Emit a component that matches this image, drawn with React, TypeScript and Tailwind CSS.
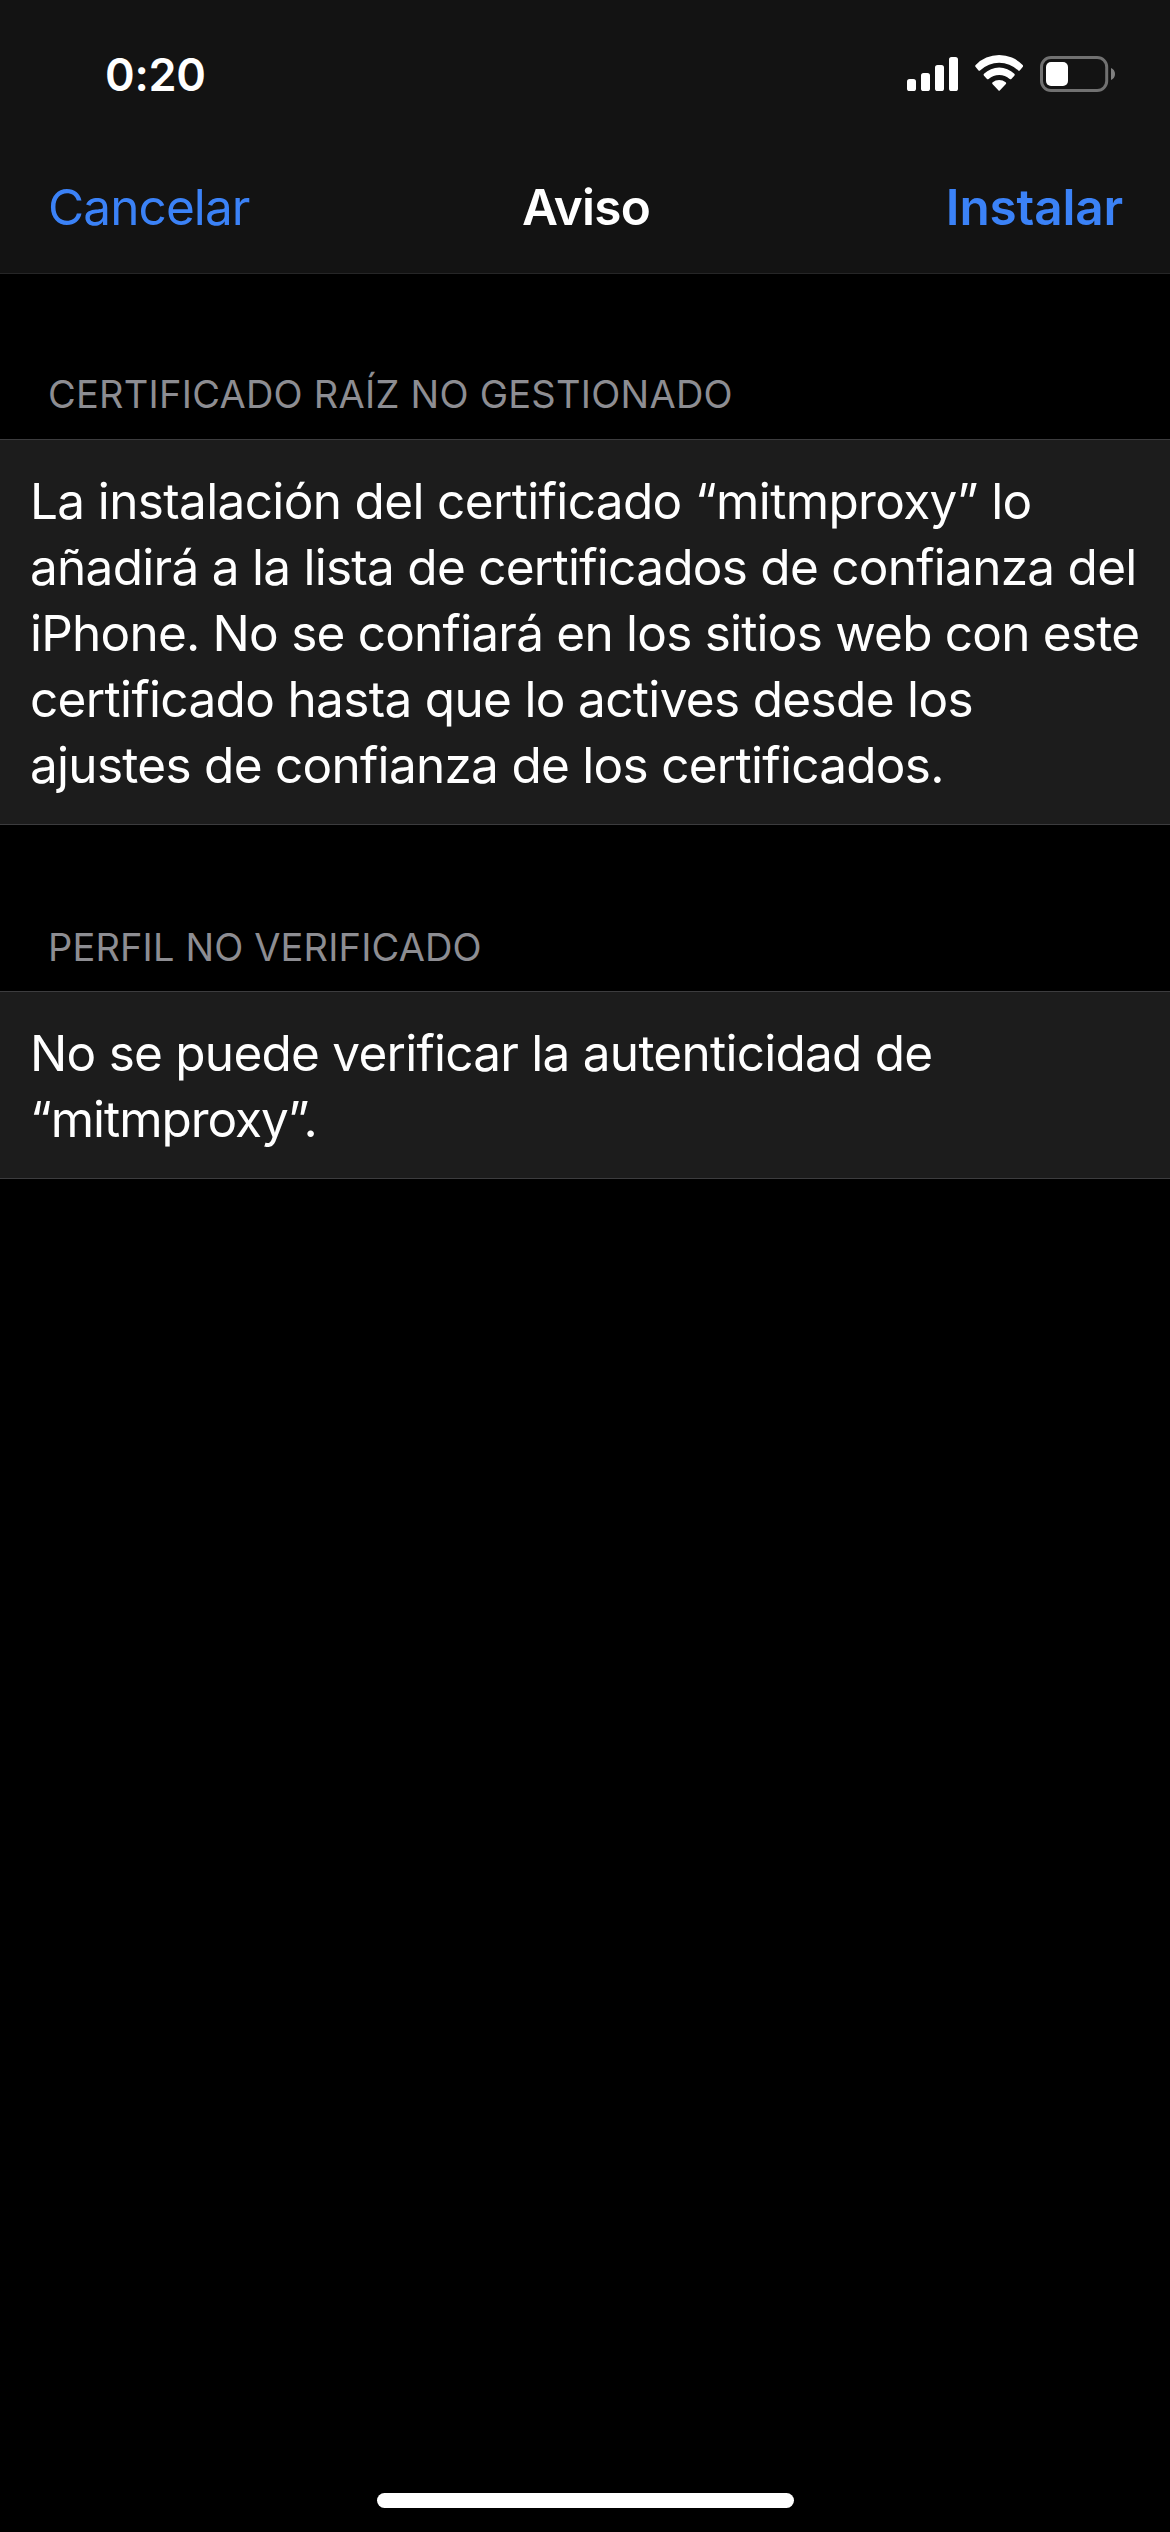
type Line = { text: string; className: string };

function SignalIcon() {
  return (
    <svg width="51" height="34" viewBox="0 0 51 34" fill="#fff" aria-hidden="true">
      <rect x="0" y="22" width="9" height="12" rx="2.6" />
      <rect x="14" y="16" width="9" height="18" rx="2.6" />
      <rect x="28" y="8" width="9" height="26" rx="2.6" />
      <rect x="42" y="0" width="9" height="34" rx="2.6" />
    </svg>
  );
}

function WifiIcon() {
  return (
    <svg width="48.33" height="36" viewBox="0 0 145 108" fill="#fff" aria-hidden="true">
      <path d="M2 30A98 98 0 0 1 143 30Q146 33 143 36L135 46Q132 49 129 46A82 82 0 0 0 16 46Q13 49 10 46L2 36Q-1 33 2 30Z" />
      <path d="M27 56A66 66 0 0 1 118 56Q121 59 118 62L109 72Q107 74 104 72A48 48 0 0 0 41 72Q38 74 36 72L27 62Q24 59 27 56Z" />
      <path d="M53 82A30 30 0 0 1 92 82Q95 85 92 88L75 106Q72.5 109 70 106L53 88Q50 85 53 82Z" />
    </svg>
  );
}

function BatteryIcon() {
  return (
    <svg width="75" height="36" viewBox="0 0 75 36" aria-hidden="true">
      <rect x="1.5" y="1.5" width="65.2" height="33" rx="9.5" fill="none" stroke="#717171" strokeWidth="3" />
      <rect x="6" y="6" width="22" height="24" rx="5" fill="#fff" />
      <path d="M71 12C73.5 13 75 15.3 75 18S73.5 23 71 24Z" fill="#808080" />
    </svg>
  );
}

function StatusBar() {
  return (
    <div className="flex h-[132px] items-start justify-between pl-[105px] pr-[55px]">
      <time className="mt-[47px] text-[45px] font-semibold leading-[55px] tracking-[-0.25px]">0:20</time>
      <div className="flex items-start">
        <div className="mt-[57px]">
          <SignalIcon />
        </div>
        <div className="ml-[17px] mt-[55px]">
          <WifiIcon />
        </div>
        <div className="ml-[16.67px] mt-[56px]">
          <BatteryIcon />
        </div>
      </div>
    </div>
  );
}

function NavBar() {
  return (
    <nav className="grid h-[141px] grid-cols-[1fr_auto_1fr] items-start pl-[48px] pr-[47px] pt-[42px] text-[49.5px] leading-[66px]">
      <button className="justify-self-start tracking-[-0.9px] text-[#3b82f7]">Cancelar</button>
      <h1 className="pl-[1px] font-semibold tracking-[-0.8px]">Aviso</h1>
      <button className="justify-self-end font-semibold tracking-[-0.15px] text-[#3b82f7]">Instalar</button>
    </nav>
  );
}

function Section({ title, titleClass, lines }: { title: string; titleClass: string; lines: Line[] }) {
  return (
    <section>
      <h2 className={`pl-[48px] text-[38px] leading-[46px] text-[#8d8d92] ${titleClass}`}>{title}</h2>
      <p className="border-y border-[#3c3c3e] bg-[#1c1c1c] pb-[26px] pl-[30px] pt-[28px] text-[49.5px] leading-[66px]">
        {lines.map((line) => (
          <span key={line.text} className={`block whitespace-nowrap ${line.className}`}>
            {line.text}
          </span>
        ))}
      </p>
    </section>
  );
}

const rootCertificate: Line[] = [
  { text: "La instalación del certificado “mitmproxy” lo", className: "tracking-[-0.64px]" },
  { text: "añadirá a la lista de certificados de confianza del", className: "tracking-[-0.73px]" },
  { text: "iPhone. No se confiará en los sitios web con este", className: "tracking-[-0.78px]" },
  { text: "certificado hasta que lo actives desde los", className: "tracking-[-0.67px]" },
  { text: "ajustes de confianza de los certificados.", className: "tracking-[-0.72px]" },
];

const unverifiedProfile: Line[] = [
  { text: "No se puede verificar la autenticidad de", className: "tracking-[-0.75px]" },
  { text: "“mitmproxy”.", className: "tracking-[-1.05px]" },
];

export default function App() {
  return (
    <div className="flex h-[2532px] w-[1170px] flex-col overflow-hidden bg-black font-['Inter',sans-serif] text-white">
      <header className="h-[274px] border-b border-[#262627] bg-[#131313]">
        <StatusBar />
        <NavBar />
      </header>
      <main className="flex-1">
        <Section
          title="CERTIFICADO RAÍZ NO GESTIONADO"
          titleClass="pt-[97px] pb-[22px] tracking-[0.25px]"
          lines={rootCertificate}
        />
        <Section
          title="PERFIL NO VERIFICADO"
          titleClass="pt-[99px] pb-[21px] tracking-[0.15px]"
          lines={unverifiedProfile}
        />
      </main>
      <div className="mb-[24px] ml-[377px] h-[15px] w-[417px] rounded-full bg-white" />
    </div>
  );
}
